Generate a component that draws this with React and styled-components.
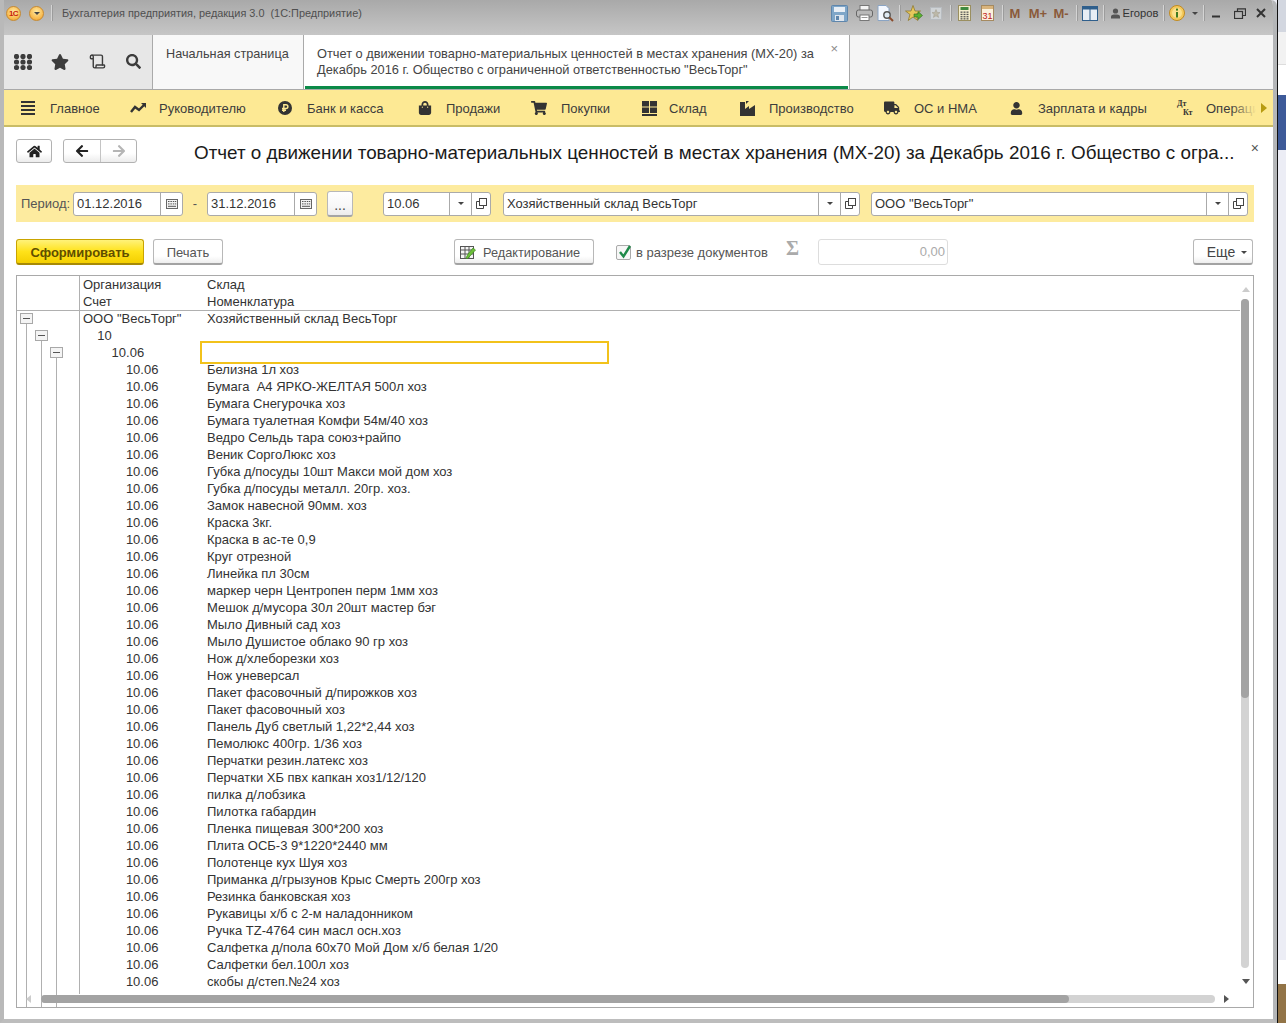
import React from "react";
import styled, { createGlobalStyle } from "styled-components";
import { FaHome, FaArrowLeft, FaArrowRight, FaStar, FaSearch, FaShoppingBag, FaShoppingCart, FaTruck, FaUser } from "react-icons/fa";
import { Scroll } from "lucide-react";

const Global = createGlobalStyle`
  html, body { margin: 0; padding: 0; background: #ecedf5; }
  body { font-family: "Liberation Sans", Arial, sans-serif; font-size: 12px; color: #333; overflow: hidden; }
`;

const Screen = styled.div`display: flex; width: 1286px; height: 1023px; overflow: hidden;`;
const Win = styled.div`
  width: 1277px; height: 1023px; box-sizing: border-box; display: flex; flex-direction: column;
  border-left: 4px solid #b9b9b9; border-right: 4px solid #b4b6b8; border-bottom: 4px solid #bdbdbd;
  border-top-right-radius: 6px; background: #fff; overflow: hidden;
`;
const BlackLine = styled.div`width: 1px; background: #111;`;
const Strip = styled.div`flex: 1; display: flex; flex-direction: column;`;
const StripPart = styled.div`height: ${p => p.$h}px; flex: ${p => p.$grow ? 1 : "none"}; background: ${p => p.$c}; border-bottom: ${p => p.$line ? "1px solid #ddd" : "none"}; box-sizing: border-box;`;

const TitleBar = styled.div`
  height: 35px; flex: none; display: flex; align-items: center; margin-left: -4px; padding-left: 4px;
  background: linear-gradient(#a9a9a9, #c6c6c6); box-sizing: border-box; padding-bottom: 9px;
`;
const LogoCircle = styled.div`
  width: 15px; height: 15px; border-radius: 50%; flex: none; margin-left: ${p => p.$ml || 0}px;
  background: radial-gradient(circle at 50% 35%, #ffe9a0, #f7b648 70%, #d98a20);
  border: 1px solid #c88a30; box-sizing: border-box; display: flex; align-items: center; justify-content: center;
  color: #c8200c; font-size: 8px; font-weight: 700; letter-spacing: -0.5px;
`;
const TitleSep = styled.div`width: 1px; height: 16px; background: #d4d4d4; border-right: 1px solid #9c9c9c; margin: 0 ${p => p.$r || 0}px 0 ${p => p.$l || 0}px; flex: none;`;
const AppTitle = styled.div`font-size: 10.9px; color: #4f4f4f; white-space: pre; flex: none; margin-left: 9px;`;
const Tools = styled.div`margin-left: auto; display: flex; align-items: center; height: 24px; padding-right: 6px;`;
const ToolSlot = styled.div`width: ${p => p.$w}px; flex: none; height: 24px; display: flex; align-items: center; justify-content: center; position: relative;`;
const MemoText = styled.span`font-size: 13px; font-weight: 700; color: #8a5a3a;`;
const UserName = styled.span`font-size: 11.2px; color: #333; white-space: nowrap;`;

const NavRow = styled.div`height: 55px; flex: none; display: flex; border-bottom: 1px solid #a9a9a9; box-sizing: border-box; background: #f5f5f5;`;
const IconPanel = styled.div`width: 149px; flex: none; background: #e7e7e7; border-right: 1px solid #aaa; display: flex; align-items: center; padding-left: 10px; box-sizing: border-box; color: #3c3c3c; padding-bottom: 1px;`;
const PanelSlot = styled.div`width: ${p => p.$w}px; flex: none; display: flex; justify-content: center; align-items: center;`;
const HomeTab = styled.div`width: 151px; flex: none; box-sizing: border-box; background: #f8f8f8; border-right: 1px solid #aaa; padding: 11px 0 0 13px; font-size: 12.7px; color: #444; line-height: 16px;`;
const ActiveTab = styled.div`
  width: 546px; flex: none; box-sizing: border-box; background: #fff; border-right: 1px solid #aaa; position: relative;
  padding: 11px 0 0 13px; font-size: 12.8px; color: #444; line-height: 16px; white-space: nowrap;
  &::after { content: ""; position: absolute; left: 1px; right: 1px; bottom: 0; height: 3px; background: #0b8a48; }
`;
const TabClose = styled.span`position: absolute; right: 11px; top: 7px; color: #8a8a8a; font-size: 13px; line-height: 14px;`;

const SectionBar = styled.div`height: 37px; flex: none; box-sizing: border-box; background: #fde994; border-bottom: 2px solid #c9bc66; display: flex; align-items: center; padding: 1px 0 0 17px; position: relative; overflow: hidden;`;
const SectionItem = styled.div`width: ${p => p.$w}px; flex: none; display: flex; align-items: center; font-size: 13px; color: #3c3c3c; white-space: nowrap;`;
const SectionIcon = styled.div`width: ${p => p.$w}px; flex: none; color: #333; display: flex; align-items: center;`;
const Dk = styled.div`display: flex; flex-direction: column; font-family: "Liberation Serif", serif; font-size: 8px; line-height: 9px; font-weight: 700; color: #333;`;
const DkLow = styled.span`margin-left: 6px;`;
const FadeRight = styled.div`position: absolute; right: 0; top: 0; bottom: 0; width: 42px; background: linear-gradient(to right, rgba(253,233,148,0), #fde994 60%);`;
const MoreArrow = styled.div`position: absolute; right: 6px; top: 13px; width: 0; height: 0; border-left: 6px solid #b79b10; border-top: 5px solid transparent; border-bottom: 5px solid transparent;`;

const Content = styled.div`flex: 1; display: flex; flex-direction: column; padding: 12px 19px 0 12px; min-height: 0;`;
const HeadRow = styled.div`height: 24px; flex: none; display: flex; align-items: center;`;
const Group = styled.div`display: flex; height: 24px; box-sizing: border-box; margin-left: ${p => p.$ml || 0}px; border: 1px solid #b2b2b2; border-radius: 3px; background: linear-gradient(#fff, #fff 60%, #ececec);`;
const GroupBtn = styled.div`width: ${p => p.$w}px; display: flex; align-items: center; justify-content: center; color: ${p => p.$c}; border-left: ${p => p.$sep ? "1px solid #c4c4c4" : "none"}; font-size: 12px;`;
const Title = styled.div`margin-left: 57px; flex: none; font-size: 18.83px; color: #1a1a1a; white-space: nowrap; line-height: 24px; padding-top: 3px;`;
const ClosePage = styled.div`margin-left: auto; margin-right: -5px; font-size: 14px; color: #555; margin-top: -6px;`;

const Filter = styled.div`margin-top: 22px; height: 37px; flex: none; background: #fdeb9f; display: flex; align-items: center; padding-left: 5px; box-sizing: border-box;`;
const FilterLabel = styled.span`font-size: 13px; color: #555; width: 52px; flex: none;`;
const Field = styled.div`width: ${p => p.$w}px; height: 24px; flex: none; box-sizing: border-box; margin-left: ${p => p.$ml || 0}px; display: flex; background: #fff; border: 1px solid #aaa; border-radius: 3px; font-size: 13px; color: #333; align-items: stretch;`;
const FieldText = styled.div`flex: 1; padding-left: 3px; line-height: 21px; white-space: nowrap; overflow: hidden;`;
const FieldBtn = styled.div`width: ${p => p.$w || 21}px; flex: none; border-left: 1px solid #aaa; display: flex; align-items: center; justify-content: center;`;
const Dash = styled.span`width: 24px; flex: none; text-align: center; color: #555; font-size: 13px;`;
const DotsBtn = styled.div`width: 26px; height: 26px; flex: none; margin-left: 10px; box-sizing: border-box; border: 1px solid #b8b8b8; border-bottom: 2px solid #a5a5a5; border-radius: 3px; background: linear-gradient(#fff, #f8f8f8 60%, #ececec); display: flex; align-items: flex-end; justify-content: center; font-size: 14px; line-height: 20px; color: #444;`;
const Caret = styled.span`width: 0; height: 0; border-top: 3px solid #444; border-left: 3px solid transparent; border-right: 3px solid transparent; margin-left: ${p => p.$ml || 0}px;`;

const Actions = styled.div`margin-top: 17px; height: 26px; flex: none; display: flex; align-items: center;`;
const Btn = styled.div`
  width: ${p => p.$w}px; height: 26px; flex: none; box-sizing: border-box; margin-left: ${p => p.$ml || 0}px; padding-top: 1px;
  border: 1px solid #b8b8b8; border-bottom: 2px solid #a3a3a3; border-radius: 3px;
  background: linear-gradient(#fff, #fff 70%, #eeeeee); display: flex; align-items: center; justify-content: center;
  font-size: 13px; color: #555; white-space: nowrap;
`;
const PrimaryBtn = styled(Btn)`
  background: linear-gradient(#fff27a, #ffe21a 50%, #f4cf00); border: 1px solid #c9a400; border-bottom: 2px solid #a78a06;
  color: #5f4d00; font-weight: 700;
`;
const EditBtn = styled(Btn)`justify-content: flex-start; padding-left: 5px; gap: 7px; font-size: 12.75px;`;
const MoreBtn = styled(Btn)`font-size: 14px; padding-left: 8px; color: #444;`;
const CheckBox = styled.div`width: 15px; height: 15px; flex: none; box-sizing: border-box; margin-left: 22px; border: 1px solid #aaa; border-radius: 2px; background: #f7f7f7; position: relative; overflow: visible;`;
const CheckMark = styled.svg`position: absolute; left: 0; top: -2px;`;
const CheckLabel = styled.span`margin-left: 5px; font-size: 13px; color: #555; width: 150px; flex: none; white-space: nowrap;`;
const Sigma = styled.span`width: 32px; flex: none; font-family: "Liberation Serif", serif; font-size: 20px; font-weight: 700; color: #aaa; margin-top: -8px;`;
const Disabled = styled.div`width: 130px; height: 26px; flex: none; box-sizing: border-box; border: 1px solid #ddd; border-radius: 3px; text-align: right; padding-right: 2px; line-height: 24px; font-size: 13px; color: #aaa;`;

const Table = styled.div`margin-top: 10px; height: 733px; flex: none; box-sizing: border-box; border: 1px solid #a9a9a9; position: relative; overflow: hidden; background: #fff;`;
const HeaderRow = styled.div`display: flex; height: 35px; box-sizing: border-box; border-bottom: 1px solid #b0b0b0; margin-right: 13px;`;
const Tree = styled.div`width: 63px; flex: none; box-sizing: border-box; border-right: 1px solid #b0b0b0; display: flex; padding-left: 2px;`;
const Head1 = styled.div`width: 127px; flex: none; box-sizing: border-box; padding-left: 3px;`;
const HeadLine = styled.div`height: 17px; line-height: 17px; font-size: 13px; color: #333;`;
const Row = styled.div`display: flex; height: 17px; position: relative;`;
const Account = styled.div`width: 127px; flex: none; box-sizing: border-box; padding-left: ${p => 3 + p.$level * 14.3}px; font-size: 13px; line-height: 15px; color: #333; white-space: pre;`;
const Name = styled.div`font-size: 13px; line-height: 15px; color: #333; white-space: pre;`;
const TreeSlot = styled.div`
  width: 15px; flex: none; position: relative; height: 17px;
  &::before { content: ""; display: ${p => p.$line ? "block" : "none"}; position: absolute; left: 7px; width: 1px; top: ${p => p.$box ? 8 : 0}px; bottom: 0; background: #b0b0b0; }
`;
const Toggle = styled.div`position: absolute; left: 1px; top: 2px; width: 13px; height: 11px; box-sizing: border-box; background: #f4f4f4; border: 1px solid #a8a8a8; z-index: 1; &::after { content: ""; position: absolute; left: 2px; right: 2px; top: 4px; height: 1px; background: #555; }`;
const Filler = styled.div`display: flex; height: 3px;`;
const Selected = styled.div`position: absolute; left: 183px; top: -4px; width: 409px; height: 23px; box-sizing: border-box; border: 2px solid #f2c21b; z-index: 2;`;
const Thumb = styled.div`position: absolute; left: ${p => p.$x}px; top: ${p => p.$y}px; width: ${p => p.$w}px; height: ${p => p.$h}px; background: ${p => p.$c}; border-radius: 4px;`;
const Arrow = styled.div`position: absolute; left: ${p => p.$x}px; top: ${p => p.$y}px; width: 0; height: 0; ${p => p.$css}`;
const BottomGap = styled.div`flex: 1;`;

const items = ["Белизна 1л хоз","Бумага  А4 ЯРКО-ЖЕЛТАЯ 500л хоз","Бумага Снегурочка хоз","Бумага туалетная Комфи 54м/40 хоз","Ведро Сельдь тара союз+райпо","Веник СоргоЛюкс хоз","Губка д/посуды 10шт Макси мой дом хоз","Губка д/посуды металл. 20гр. хоз.","Замок навесной 90мм. хоз","Краска 3кг.","Краска в ас-те 0,9","Круг отрезной","Линейка пл 30см","маркер черн Центропен перм 1мм хоз","Мешок д/мусора 30л 20шт мастер бэг","Мыло Дивный сад хоз","Мыло Душистое облако 90 гр хоз","Нож д/хлеборезки хоз","Нож уневерсал","Пакет фасовочный д/пирожков хоз","Пакет фасовочный хоз","Панель Дуб светлый 1,22*2,44 хоз","Пемолюкс 400гр. 1/36 хоз","Перчатки резин.латекс хоз","Перчатки ХБ пвх капкан хоз1/12/120","пилка д/лобзика","Пилотка габардин","Пленка пищевая 300*200 хоз","Плита ОСБ-3 9*1220*2440 мм","Полотенце кух Шуя хоз","Приманка д/грызунов Крыс Смерть 200гр хоз","Резинка банковская хоз","Рукавицы х/б с 2-м наладонником","Ручка TZ-4764 син масл осн.хоз","Салфетка д/пола 60х70 Мой Дом х/б белая 1/20","Салфетки бел.100л хоз","скобы д/степ.№24 хоз"];

const Dots = () => (
  <svg width="18" height="16" viewBox="0 0 18 16" fill="#3c3c3c">
    {[2.5, 8, 13.5].map(y => [2.5, 9, 15.5].map(x => <circle key={x + "-" + y} cx={x} cy={y} r="2.6" />))}
  </svg>
);
const Bars = () => <svg width="14" height="14" viewBox="0 0 14 14" fill="#333"><rect y="0" width="14" height="2" /><rect y="4" width="14" height="2" /><rect y="8" width="14" height="2" /><rect y="12" width="14" height="2" /></svg>;
const Trend = () => <svg width="16" height="12" viewBox="0 0 16 12"><path d="M1 10 L5 5 L9 8 L14 3" fill="none" stroke="#333" strokeWidth="2.4" /><path d="M11 1 H16 V6 Z" fill="#333" /></svg>;
const Ruble = () => <svg width="14" height="14" viewBox="0 0 14 14"><circle cx="7" cy="7" r="7" fill="#333" /><path d="M5.8 11 V3.7 H8 a1.9 1.9 0 0 1 0 3.8 H4 M4 9.2 H8" fill="none" stroke="#fde994" strokeWidth="1.4" /></svg>;
const Stock = () => <svg width="15" height="15" viewBox="0 0 15 15" fill="#333"><rect width="7" height="5.5" /><rect x="8" width="7" height="5.5" /><rect y="6.5" width="7" height="5.5" /><rect x="8" y="6.5" width="7" height="5.5" /><rect y="13" width="15" height="2" /></svg>;
const Factory = () => <svg width="15" height="15" viewBox="0 0 15 15" fill="#333"><path d="M0 15 V1 H5 V8 L9 5 V8 L15 4 V15 Z" /><path d="M6 0 L9 0 L6 3 Z" /></svg>;
const Cal = () => <svg width="12" height="10" viewBox="0 0 12 10"><rect x=".5" y=".5" width="11" height="9" fill="#f2f2f2" stroke="#666" /><g fill="#555"><rect x="2" y="2" width="1.5" height="1" /><rect x="4.4" y="2" width="1.5" height="1" /><rect x="6.8" y="2" width="1.5" height="1" /><rect x="9" y="2" width="1.2" height="1" /><rect x="2" y="4.4" width="1.5" height="1" /><rect x="4.4" y="4.4" width="1.5" height="1" /><rect x="6.8" y="4.4" width="1.5" height="1" /><rect x="9" y="4.4" width="1.2" height="1" /><rect x="2" y="6.8" width="8" height="1" /></g></svg>;
const OpenIcon = () => <svg width="11" height="11" viewBox="0 0 11 11" fill="none" stroke="#444"><rect x="3.5" y=".5" width="7" height="7" /><path d="M3.5 3.5 H.5 V10.5 H7.5 V7.5" /></svg>;

const Floppy = () => <svg width="17" height="17" viewBox="0 0 17 17"><rect x=".5" y=".5" width="16" height="16" rx="1" fill="#7fa6c8" stroke="#5f86ac" /><rect x="3" y="2" width="11" height="5" fill="#e8eef5" /><rect x="4" y="10" width="9" height="6" fill="#dfe6ee" /><rect x="5" y="11" width="3" height="4" fill="#5f86ac" /></svg>;
const Printer = () => <svg width="17" height="16" viewBox="0 0 17 16"><rect x="4" y=".5" width="9" height="5" fill="#f4f4f4" stroke="#777" /><rect x=".5" y="5" width="16" height="7" rx="2" fill="#b9b9b9" stroke="#666" /><rect x="4" y="10" width="9" height="5.5" fill="#fff" stroke="#777" /><rect x="5.5" y="12" width="6" height="1" fill="#999" /></svg>;
const Preview = () => <svg width="17" height="17" viewBox="0 0 17 17"><path d="M1 .5 H9 L12 3.5 V15.5 H1 Z" fill="#f4f8ff" stroke="#8aa4c4" /><circle cx="10" cy="10" r="3.2" fill="#dfe9f3" stroke="#555" strokeWidth="1.4" /><path d="M12.4 12.4 L16 16" stroke="#8a4a2a" strokeWidth="2" /></svg>;
const StarGo = () => <svg width="18" height="17" viewBox="0 0 18 17"><path d="M8 0.5 L10 6 L15.5 6 L11 9.5 L12.8 15.5 L8 12 L3.2 15.5 L5 9.5 L.5 6 L6 6 Z" fill="#e8c85c" stroke="#8f7a30" strokeWidth=".8" /><path d="M9 9 H13 V6.5 L17.5 10.5 L13 14.5 V12 H9 Z" fill="#5cb030" stroke="#2f6a20" strokeWidth=".6" /></svg>;
const StarOff = () => <svg width="12" height="13" viewBox="0 0 12 13"><rect x=".5" y=".5" width="11" height="12" fill="#cfd3d6" stroke="#b8bcc0" /><path d="M6 2.5 L7.2 5.4 L10 5.6 L7.8 7.5 L8.6 10.4 L6 8.8 L3.4 10.4 L4.2 7.5 L2 5.6 L4.8 5.4 Z" fill="#bcb8a8" stroke="#a09a8a" strokeWidth=".5" /></svg>;
const Calc = () => <svg width="13" height="16" viewBox="0 0 13 16"><rect x=".5" y=".5" width="12" height="15" fill="#f4eecd" stroke="#9a8f60" /><rect x="2.5" y="2" width="8" height="3" fill="#3f8a3f" /><g fill="#555">{[6.5, 8.8, 11.1, 13.2].map(y => [2.5, 5.5, 8.5].map(x => <rect key={x + "_" + y} x={x} y={y} width="2" height="1.3" />))}</g></svg>;
const Calendar = () => <svg width="13" height="16" viewBox="0 0 13 16"><rect x=".5" y=".5" width="12" height="15" fill="#fbf1dc" stroke="#a58a60" /><rect x="1" y="1" width="11" height="3" fill="#d9b47c" /><text x="6.5" y="13.5" textAnchor="middle" fontSize="9" fill="#c02020" fontFamily="Liberation Sans">31</text></svg>;
const Panels = () => <svg width="16" height="15" viewBox="0 0 16 15"><rect x=".5" y=".5" width="15" height="14" fill="#e8eef5" stroke="#2f5f8c" /><rect x="1" y="1" width="14" height="2.5" fill="#2f5f8c" /><rect x="7.5" y="1" width="1" height="13" fill="#2f5f8c" /></svg>;
const Info = () => <svg width="16" height="16" viewBox="0 0 16 16"><circle cx="8" cy="8" r="7.5" fill="#f4c95c" stroke="#c08a20" /><circle cx="8" cy="8" r="5" fill="#fbe08c" /><rect x="7" y="7" width="2" height="5.5" fill="#3f7a20" /><rect x="7" y="3.6" width="2" height="2" fill="#3f7a20" /></svg>;
const UserSmall = () => <svg width="9" height="11" viewBox="0 0 9 11" fill="#555"><circle cx="4.5" cy="3" r="2.6" /><path d="M0 10.5 V8.5 Q0 6.6 3 6.4 H6 Q9 6.6 9 8.5 V10.5 Z" /></svg>;
const Min = () => <svg width="9" height="9" viewBox="0 0 9 9"><rect y="6.5" width="8" height="2" fill="#333" /></svg>;
const Restore = () => <svg width="12" height="11" viewBox="0 0 12 11" fill="none" stroke="#333"><rect x=".5" y="3.5" width="8" height="7" strokeWidth="1.2" /><path d="M3.5 3.5 V.8 H11.5 V7.5 H8.5" strokeWidth="1.2" /></svg>;
const CloseX = () => <svg width="10" height="10" viewBox="0 0 10 10"><path d="M1 1 L9 9 M9 1 L1 9" stroke="#333" strokeWidth="2" /></svg>;
const PenTable = () => <svg width="16" height="15" viewBox="0 0 16 15"><rect x=".5" y="1.5" width="13" height="12" fill="#f4f4f4" stroke="#555" /><path d="M.5 5 H13.5 M.5 9 H13.5 M5 1.5 V13.5 M9 1.5 V13.5" stroke="#555" /><path d="M6 13 L8 9 L13 3 L15.5 5 L10 11 L7 14 Z" fill="#6cbf3a" stroke="#3f8a20" strokeWidth=".7" /></svg>;

const sections = [
  { t: "Главное", w: 109, iw: 29, i: <Bars /> },
  { t: "Руководителю", w: 148, iw: 29, i: <Trend /> },
  { t: "Банк и касса", w: 140, iw: 29, i: <Ruble /> },
  { t: "Продажи", w: 113, iw: 28, i: <FaShoppingBag size={14} /> },
  { t: "Покупки", w: 111, iw: 30, i: <FaShoppingCart size={16} /> },
  { t: "Склад", w: 98, iw: 27, i: <Stock /> },
  { t: "Производство", w: 144, iw: 29, i: <Factory /> },
  { t: "ОС и НМА", w: 126, iw: 30, i: <FaTruck size={16} /> },
  { t: "Зарплата и кадры", w: 167, iw: 28, i: <FaUser size={13} /> },
  { t: "Операции", w: 95, iw: 29, i: <Dk><span>Дт</span><DkLow>Кт</DkLow></Dk> },
];

const FieldDrop = () => <FieldBtn><Caret /></FieldBtn>;
const FieldOpen = () => <FieldBtn $w={18}><OpenIcon /></FieldBtn>;

const TreeCells = ({ kind }) => (
  <Tree>
    <TreeSlot $line $box={kind === 0}>{kind === 0 && <Toggle />}</TreeSlot>
    <TreeSlot $line={kind >= 1} $box={kind === 1}>{kind === 1 && <Toggle />}</TreeSlot>
    <TreeSlot $line={kind >= 2} $box={kind === 2}>{kind === 2 && <Toggle />}</TreeSlot>
  </Tree>
);

export default function App() {
  return (
    <Screen>
      <Global />
      <Win>
        <TitleBar>
          <LogoCircle $ml={2}>1С</LogoCircle>
          <LogoCircle $ml={8}><Caret /></LogoCircle>
          <TitleSep $l={7} />
          <AppTitle>Бухгалтерия предприятия, редакция 3.0  (1С:Предприятие)</AppTitle>
          <Tools>
            <ToolSlot $w={28}><Floppy /></ToolSlot>
            <ToolSlot $w={23}><Printer /></ToolSlot>
            <ToolSlot $w={18}><Preview /></ToolSlot>
            <TitleSep $l={5} $r={3} />
            <ToolSlot $w={20}><StarGo /></ToolSlot>
            <ToolSlot $w={24}><StarOff /></ToolSlot>
            <TitleSep $l={2} />
            <ToolSlot $w={24}><Calc /></ToolSlot>
            <ToolSlot $w={22}><Calendar /></ToolSlot>
            <TitleSep $l={4} />
            <ToolSlot $w={22}><MemoText>М</MemoText></ToolSlot>
            <ToolSlot $w={24}><MemoText>М+</MemoText></ToolSlot>
            <ToolSlot $w={22}><MemoText>М-</MemoText></ToolSlot>
            <TitleSep $l={4} $r={2} />
            <ToolSlot $w={20}><Panels /></ToolSlot>
            <TitleSep $l={3} $r={4} />
            <ToolSlot $w={12}><UserSmall /></ToolSlot>
            <ToolSlot $w={39}><UserName>Егоров</UserName></ToolSlot>
            <TitleSep $l={3} $r={3} />
            <ToolSlot $w={18}><Info /></ToolSlot>
            <ToolSlot $w={17}><Caret /></ToolSlot>
            <TitleSep $r={2} />
            <ToolSlot $w={18}><Min /></ToolSlot>
            <ToolSlot $w={30}><Restore /></ToolSlot>
            <ToolSlot $w={12}><CloseX /></ToolSlot>
          </Tools>
        </TitleBar>
        <NavRow>
          <IconPanel>
            <PanelSlot $w={18}><Dots /></PanelSlot>
            <PanelSlot $w={55}><FaStar size={18} /></PanelSlot>
            <PanelSlot $w={20}><Scroll size={17} strokeWidth={2} /></PanelSlot>
            <PanelSlot $w={52}><FaSearch size={15} /></PanelSlot>
          </IconPanel>
          <HomeTab>Начальная страница</HomeTab>
          <ActiveTab>
            Отчет о движении товарно-материальных ценностей в местах хранения (МХ-20) за<br />
            Декабрь 2016 г. Общество с ограниченной ответственностью "ВесьТорг"
            <TabClose>×</TabClose>
          </ActiveTab>
        </NavRow>
        <SectionBar>
          {sections.map(s => (
            <SectionItem key={s.t} $w={s.w}>
              <SectionIcon $w={s.iw}>{s.i}</SectionIcon>
              {s.t}
            </SectionItem>
          ))}
          <FadeRight />
          <MoreArrow />
        </SectionBar>
        <Content>
          <HeadRow>
            <Group><GroupBtn $w={34} $c="#222"><FaHome size={15} /></GroupBtn></Group>
            <Group $ml={11}>
              <GroupBtn $w={36} $c="#222"><FaArrowLeft size={14} /></GroupBtn>
              <GroupBtn $w={35} $c="#b5b5b5" $sep><FaArrowRight size={14} /></GroupBtn>
            </Group>
            <Title>Отчет о движении товарно-материальных ценностей в местах хранения (МХ-20) за Декабрь 2016 г. Общество с огра...</Title>
            <ClosePage>×</ClosePage>
          </HeadRow>
          <Filter>
            <FilterLabel>Период:</FilterLabel>
            <Field $w={110}><FieldText>01.12.2016</FieldText><FieldBtn><Cal /></FieldBtn></Field>
            <Dash>-</Dash>
            <Field $w={110}><FieldText>31.12.2016</FieldText><FieldBtn><Cal /></FieldBtn></Field>
            <DotsBtn>...</DotsBtn>
            <Field $w={108} $ml={30}><FieldText>10.06</FieldText><FieldDrop /><FieldOpen /></Field>
            <Field $w={357} $ml={12}><FieldText>Хозяйственный склад ВесьТорг</FieldText><FieldDrop /><FieldOpen /></Field>
            <Field $w={377} $ml={11}><FieldText>ООО "ВесьТорг"</FieldText><FieldDrop /><FieldOpen /></Field>
          </Filter>
          <Actions>
            <PrimaryBtn $w={128}>Сформировать</PrimaryBtn>
            <Btn $w={70} $ml={9}>Печать</Btn>
            <EditBtn $w={140} $ml={231}><PenTable />Редактирование</EditBtn>
            <CheckBox>
              <CheckMark width="15" height="16" viewBox="0 0 15 16"><path d="M3 8 L6.5 12.5 L13 2" fill="none" stroke="#1f8a4a" strokeWidth="2.4" /></CheckMark>
            </CheckBox>
            <CheckLabel>в разрезе документов</CheckLabel>
            <Sigma>Σ</Sigma>
            <Disabled>0,00</Disabled>
            <MoreBtn $w={60} $ml={245}>Еще<Caret $ml={6} /></MoreBtn>
          </Actions>
          <Table>
            <HeaderRow>
              <Tree />
              <Head1><HeadLine>Организация</HeadLine><HeadLine>Счет</HeadLine></Head1>
              <div><HeadLine>Склад</HeadLine><HeadLine>Номенклатура</HeadLine></div>
            </HeaderRow>
            <Row>
              <TreeCells kind={0} />
              <Account $level={0}>ООО "ВесьТорг"</Account>
              <Name>Хозяйственный склад ВесьТорг</Name>
            </Row>
            <Row>
              <TreeCells kind={1} />
              <Account $level={1}>10</Account>
            </Row>
            <Row>
              <TreeCells kind={2} />
              <Account $level={2}>10.06</Account>
              <Selected />
            </Row>
            {items.map(n => (
              <Row key={n}>
                <TreeCells kind={3} />
                <Account $level={3}>10.06</Account>
                <Name>{n}</Name>
              </Row>
            ))}
            <Filler><TreeCells kind={3} /></Filler>
            <Thumb $x={1224} $y={23} $w={8} $h={669} $c="#d3d3d3" />
            <Thumb $x={1224} $y={23} $w={8} $h={399} $c="#a3a3a3" />
            <Thumb $x={24} $y={719} $w={1174} $h={8} $c="#d3d3d3" />
            <Thumb $x={24} $y={719} $w={1028} $h={8} $c="#a3a3a3" />
            <Arrow $x={1225} $y={11} $css="border-bottom: 5px solid #ccc; border-left: 4px solid transparent; border-right: 4px solid transparent;" />
            <Arrow $x={1225} $y={703} $css="border-top: 5px solid #555; border-left: 4px solid transparent; border-right: 4px solid transparent;" />
            <Arrow $x={9} $y={719} $css="border-right: 5px solid #ccc; border-top: 4px solid transparent; border-bottom: 4px solid transparent;" />
            <Arrow $x={1207} $y={719} $css="border-left: 5px solid #555; border-top: 4px solid transparent; border-bottom: 4px solid transparent;" />
          </Table>
          <BottomGap />
        </Content>
      </Win>
      <BlackLine />
      <Strip>
        <StripPart $h={32} $c="#d3d7e0" />
        <StripPart $h={33} $c="#f2f2f2" $line />
        <StripPart $h={30} $c="#ffffff" />
        <StripPart $h={55} $c="#3d5a99" />
        <StripPart $h={810} $c="#ecedf5" />
        <StripPart $h={24} $c="#ffffff" />
        <StripPart $grow $c="#927447" />
      </Strip>
    </Screen>
  );
}
